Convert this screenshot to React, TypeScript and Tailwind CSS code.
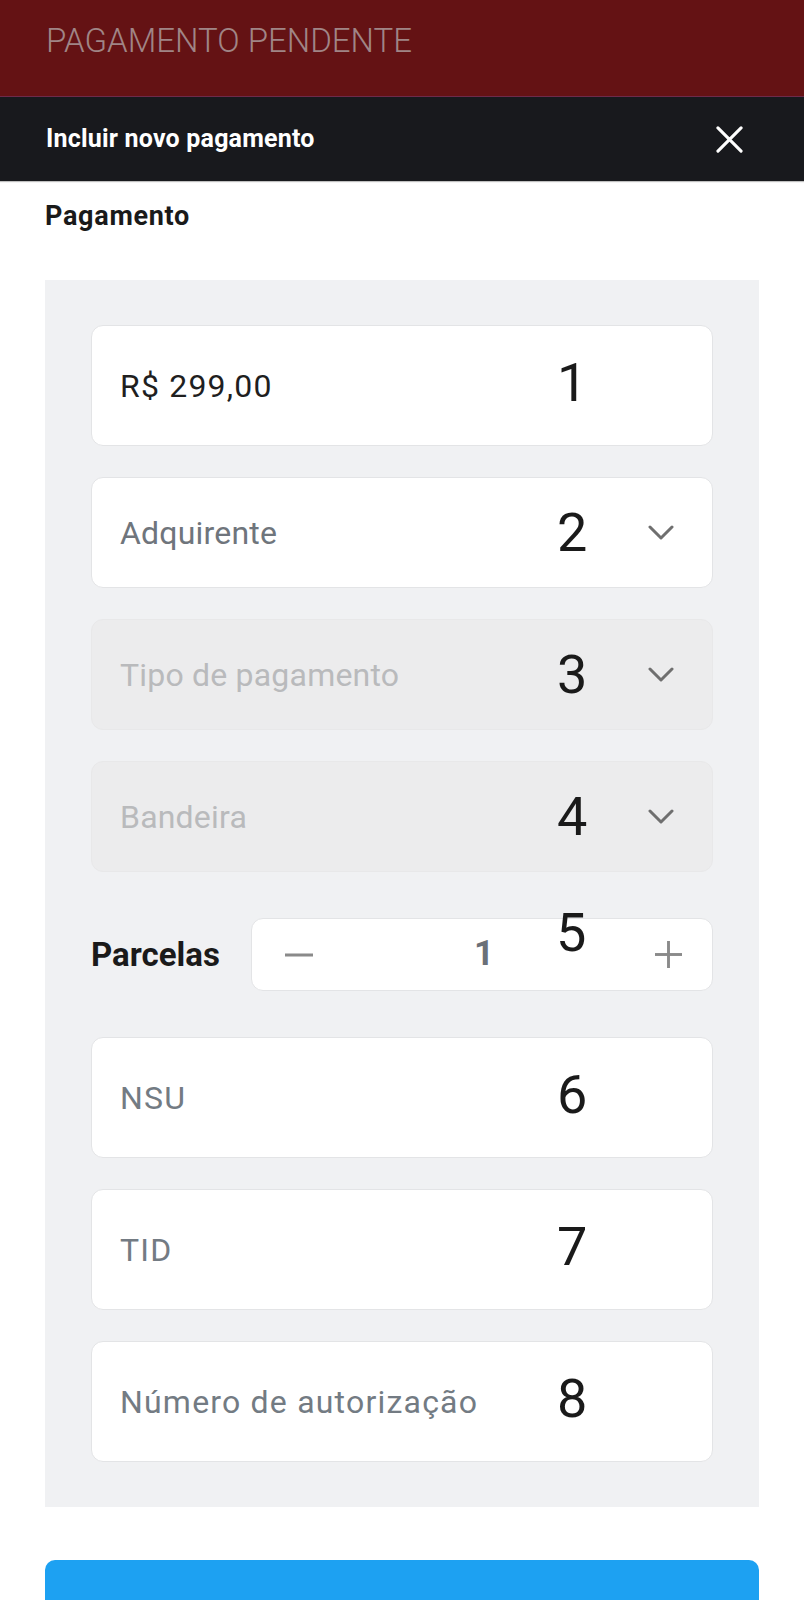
import React from 'react';

const FONT = { fontFamily: 'Roboto, "Noto Sans", Arial, sans-serif' };

function Chevron() {
  return (
    <svg className="w-[26px] h-[15px]" viewBox="0 0 26 15" fill="none" stroke="#6f6f6f" strokeWidth={3}>
      <path d="M2 2l11 11L24 2" strokeLinecap="round" strokeLinejoin="round" />
    </svg>
  );
}

function Marker({ n, className = '' }: { n: string; className?: string }) {
  return (
    <span
      className={`absolute left-[465px] top-1/2 text-[54px] leading-none text-[#1a1a1a] font-normal ${className}`}
    >
      {n}
    </span>
  );
}

function TextField({ label, value, n }: { label: string; value?: boolean; n: string }) {
  return (
    <div className="relative h-[121px] rounded-[12px] border border-[#e3e4e6] bg-white flex items-center px-[28px]">
      <span className={`text-[32px] tracking-[1.2px] ${value ? 'text-[#1f1f1f]' : 'text-[#737b83]'}`}>{label}</span>
      <Marker n={n} className="-translate-y-[55%]" />
    </div>
  );
}

function SelectField({ label, disabled, n }: { label: string; disabled?: boolean; n: string }) {
  return (
    <div
      className={`relative h-[111px] rounded-[12px] border flex items-center justify-between pl-[28px] pr-[38px] ${
        disabled ? 'bg-[#ececed] border-[#e8e8e9]' : 'bg-white border-[#e3e4e6]'
      }`}
    >
      <span className={`text-[32px] tracking-[0.2px] ${disabled ? 'text-[#b9babc]' : 'text-[#6f757c]'}`}>{label}</span>
      <Chevron />
      <Marker n={n} className="-translate-y-1/2" />
    </div>
  );
}

export default function App() {
  return (
    <div className="w-[804px] min-h-screen bg-white" style={FONT}>
      <header className="h-[97px] bg-[#641214] border-b border-[#6e2a4a] flex items-center px-[46px]">
        <h1 className="text-[33px] font-light text-[#a08586] -mt-[14px]">PAGAMENTO PENDENTE</h1>
      </header>

      <div className="h-[84px] bg-[#18191d] flex items-center justify-between pl-[46px] pr-[61px] shadow-[0_1px_1px_rgba(0,0,0,0.25)]">
        <h2 className="text-[25px] font-bold text-white tracking-[0.2px]">Incluir novo pagamento</h2>
        <svg className="w-[27px] h-[27px]" viewBox="0 0 28 28" fill="none" stroke="white" strokeWidth={3.2}>
          <path d="M2 2l24 24M26 2L2 26" strokeLinecap="round" />
        </svg>
      </div>

      <main className="px-[45px]">
        <p className="pt-[20px] text-[27px] font-bold text-[#1a1a1a] leading-[30px] tracking-[0.7px]">Pagamento</p>

        <section className="mt-[49px] bg-[#f0f1f3] px-[46px] py-[45px] flex flex-col gap-[31px]">
          <TextField label="R$ 299,00" value n="1" />
          <SelectField label="Adquirente" n="2" />
          <SelectField label="Tipo de pagamento" disabled n="3" />
          <SelectField label="Bandeira" disabled n="4" />

          <div className="relative flex items-center justify-between my-[15px]">
            <span className="text-[33px] font-bold text-[#1a1a1a]">Parcelas</span>
            <div className="w-[462px] h-[73px] rounded-[12px] border border-[#e3e4e6] bg-white flex items-center justify-between pl-[33px] pr-[30px]">
              <svg className="w-[28px] h-[4px]" viewBox="0 0 28 4">
                <rect width="28" height="3" y="0.5" fill="#8a8a8a" />
              </svg>
              <span className="text-[35px] font-bold text-[#6b7078]">1</span>
              <svg className="w-[27px] h-[27px]" viewBox="0 0 28 28">
                <rect x="12.5" y="0" width="3" height="28" fill="#8a8a8a" />
                <rect x="0" y="12.5" width="28" height="3" fill="#8a8a8a" />
              </svg>
            </div>
            <Marker n="5" className="-translate-y-[90%]" />
          </div>

          <TextField label="NSU" n="6" />
          <TextField label="TID" n="7" />
          <TextField label="Número de autorização" n="8" />
        </section>

        <button className="mt-[53px] w-full h-[80px] rounded-t-[10px] bg-[#1da1f2]" />
      </main>
    </div>
  );
}
